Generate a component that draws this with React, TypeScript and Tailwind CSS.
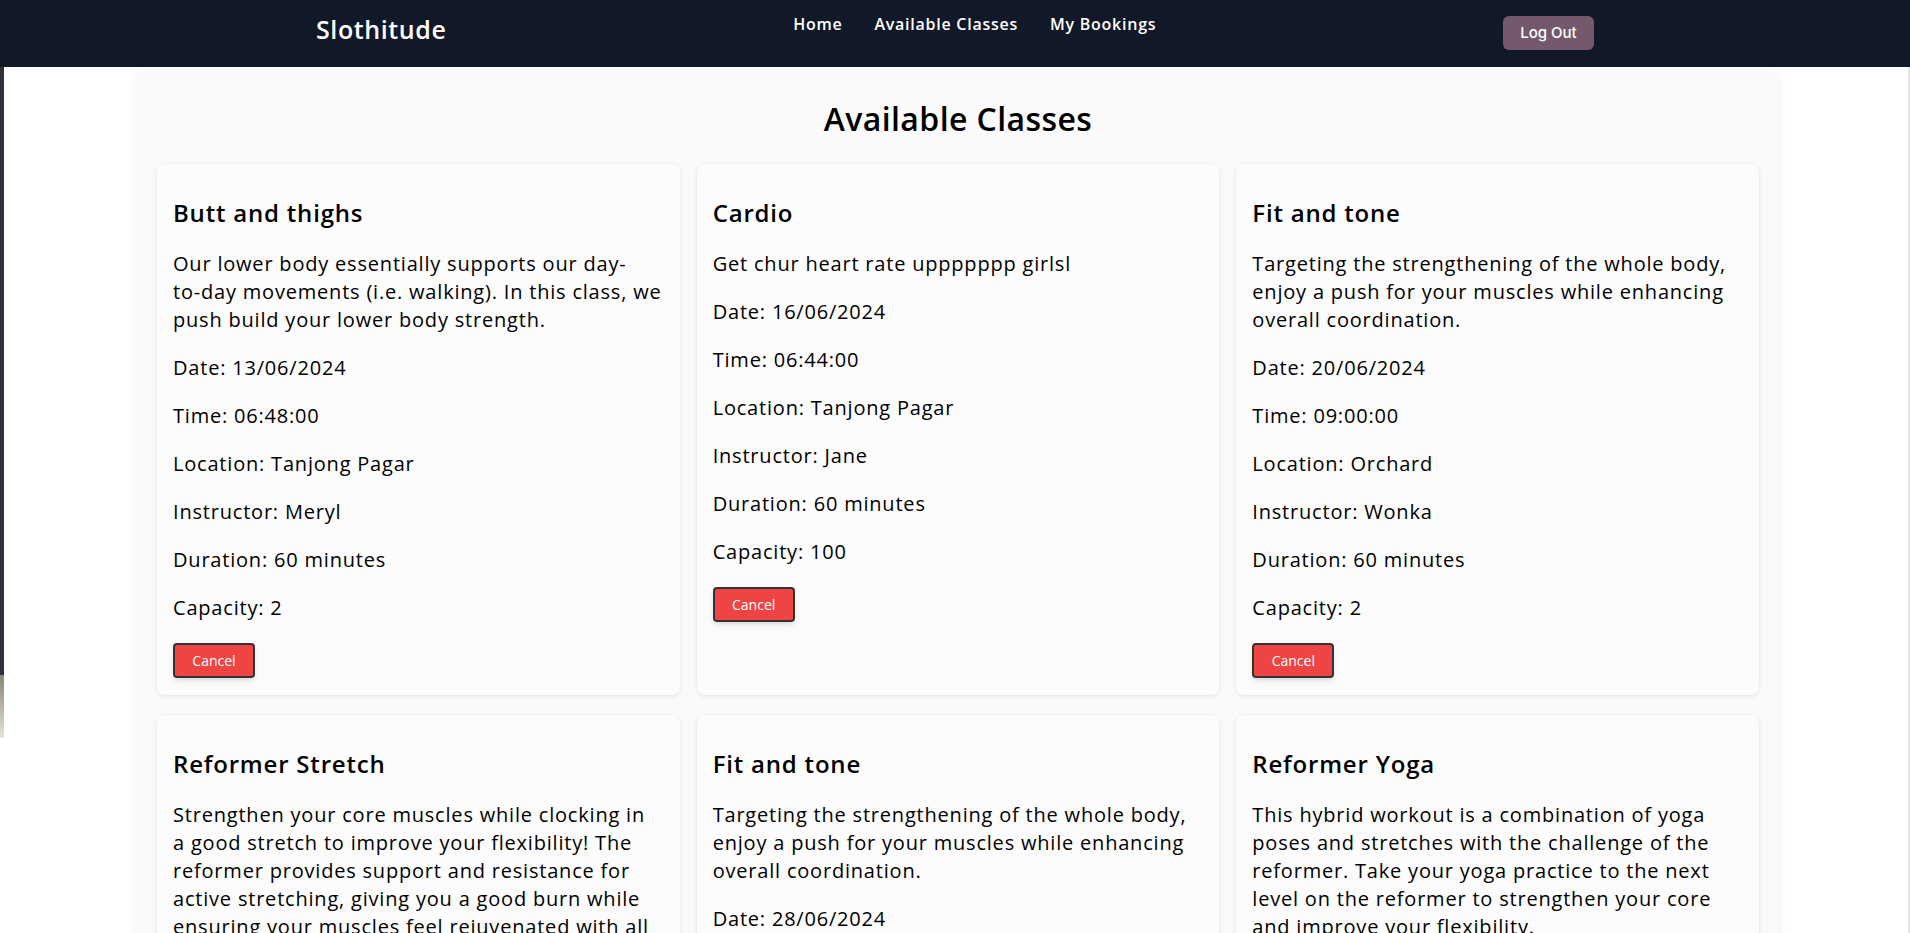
import React from 'react'

interface ClassItem {
    id: number;
    name: string;
    description: React.ReactNode;
    date: string;
    time: string;
    location: string;
    instructor: string;
    duration: number;
    capacity: number;
}

const classes: ClassItem[] = [
    {
        id: 1,
        name: "Butt and thighs",
        description: (
            <>
                Our lower body essentially supports our day-<span className="whitespace-nowrap">to-day</span> movements (i.e. walking). In this class, we push build your lower body strength.
            </>
        ),
        date: "13/06/2024",
        time: "06:48:00",
        location: "Tanjong Pagar",
        instructor: "Meryl",
        duration: 60,
        capacity: 2,
    },
    {
        id: 2,
        name: "Cardio",
        description: "Get chur heart rate uppppppp girlsl",
        date: "16/06/2024",
        time: "06:44:00",
        location: "Tanjong Pagar",
        instructor: "Jane",
        duration: 60,
        capacity: 100,
    },
    {
        id: 3,
        name: "Fit and tone",
        description: "Targeting the strengthening of the whole body, enjoy a push for your muscles while enhancing overall coordination.",
        date: "20/06/2024",
        time: "09:00:00",
        location: "Orchard",
        instructor: "Wonka",
        duration: 60,
        capacity: 2,
    },
    {
        id: 4,
        name: "Reformer Stretch",
        description: (
            <>
                Strengthen your core muscles while clocking in <span className="whitespace-nowrap">a good</span> stretch to improve your flexibility! The reformer provides support and resistance for active stretching, giving you a good burn while ensuring your muscles feel rejuvenated with all the tension released.
            </>
        ),
        date: "22/06/2024",
        time: "10:30:00",
        location: "Tanjong Pagar",
        instructor: "Meryl",
        duration: 60,
        capacity: 10,
    },
    {
        id: 5,
        name: "Fit and tone",
        description: "Targeting the strengthening of the whole body, enjoy a push for your muscles while enhancing overall coordination.",
        date: "28/06/2024",
        time: "09:00:00",
        location: "Orchard",
        instructor: "Wonka",
        duration: 60,
        capacity: 2,
    },
    {
        id: 6,
        name: "Reformer Yoga",
        description: "This hybrid workout is a combination of yoga poses and stretches with the challenge of the reformer. Take your yoga practice to the next level on the reformer to strengthen your core and improve your flexibility.",
        date: "30/06/2024",
        time: "08:00:00",
        location: "Orchard",
        instructor: "Jane",
        duration: 60,
        capacity: 8,
    },
];

const App = () => {
    return (
        <div className="w-[1910px] h-[933px] overflow-hidden bg-white flex flex-col font-['Open_Sans',sans-serif] text-black">
            {/* top bar */}
            <nav className="h-[67px] shrink-0 bg-[#111827] flex justify-between items-start px-[316px]">
                <a className="pt-[13px] text-[25px] leading-8 font-semibold tracking-[0.6px] text-white">Slothitude</a>
                <div className="flex gap-8 pt-[12px]">
                    <a className="text-[16px] leading-6 font-semibold tracking-[0.75px] text-white">Home</a>
                    <a className="text-[16px] leading-6 font-semibold tracking-[0.75px] text-white">Available Classes</a>
                    <a className="text-[16px] leading-6 font-semibold tracking-[0.75px] text-white">My Bookings</a>
                </div>
                <button
                    type="button"
                    className="mt-[16px] w-[91px] h-[34px] rounded-md bg-[#74596e] text-white text-[15px] font-medium font-['Inter',sans-serif]"
                >
                    Log Out
                </button>
            </nav>

            <div className="flex flex-1 min-h-0">
                <div className="w-[4px] shrink-0 flex flex-col">
                    <div className="h-[608px] bg-[#2d3038]"></div>
                    <div className="h-[63px] bg-gradient-to-b from-[#8a8676] to-[#ebe6d3]"></div>
                </div>

                <div className="flex-1 pt-[6px]">
                    <div className="w-[1640px] ml-[134px] bg-[#fafafa] shadow-[0_0_12px_rgba(0,0,0,0.06)] px-[19px] pt-[26px] pb-6">
                        <h1 className="text-center text-[32px] leading-10 font-semibold tracking-[0.4px]">Available Classes</h1>

                        <div className="mt-[25px] grid grid-cols-3 gap-x-[17px] gap-y-[20px]">
                            {classes.map((c) => (
                                <ClassCard key={c.id} item={c} />
                            ))}
                        </div>
                    </div>
                </div>

                <div className="w-[2px] shrink-0 bg-[#e4e4e4]"></div>
            </div>
        </div>
    )
}

const ClassCard = ({ item }: { item: ClassItem }) => {
    return (
        <div className="bg-[#fcfcfc] rounded-lg shadow-[0_1px_4px_rgba(0,0,0,0.1)] px-4 pt-[33px] pb-[17px] flex flex-col items-start">
            <h2 className="text-[24px] leading-8 font-semibold tracking-[0.8px] mb-[21px]">{item.name}</h2>
            <div className="text-[20px] leading-7 tracking-[0.8px]">
                <p className="mb-5">{item.description}</p>
                <p className="mb-5">Date: {item.date}</p>
                <p className="mb-5">Time: {item.time}</p>
                <p className="mb-5">Location: {item.location}</p>
                <p className="mb-5">Instructor: {item.instructor}</p>
                <p className="mb-5">Duration: {item.duration} minutes</p>
                <p className="mb-[21px]">Capacity: {item.capacity}</p>
            </div>
            <button
                type="button"
                className="w-[82px] h-[35px] bg-[#ef4444] border-2 border-[#333] rounded text-white text-[14px] shadow-md"
            >
                Cancel
            </button>
        </div>
    );
};

export default App
